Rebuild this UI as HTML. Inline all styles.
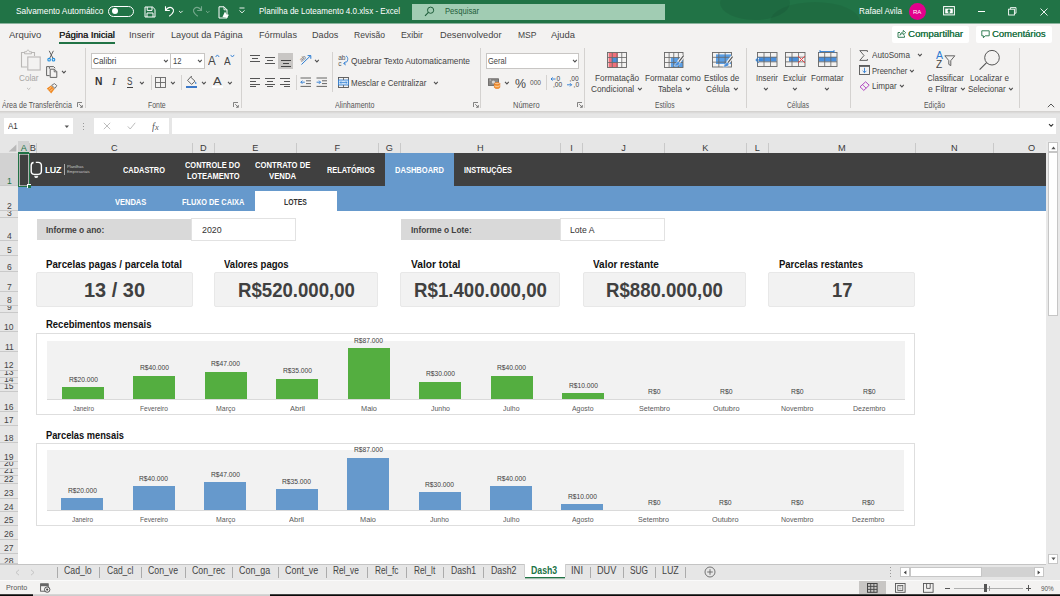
<!DOCTYPE html>
<html lang="pt-BR"><head><meta charset="utf-8"><title>Planilha de Loteamento 4.0.xlsx - Excel</title>
<style>
html,body{margin:0;padding:0;}
body{width:1060px;height:596px;overflow:hidden;background:#fff;font-family:"Liberation Sans",sans-serif;}
#r{position:relative;width:1060px;height:596px;overflow:hidden;background:#fff;}
#r div,#r svg,#r span{position:absolute;}
#r div{box-sizing:border-box;}
.t{white-space:nowrap;line-height:1;transform-origin:0 50%;}
svg{overflow:visible;}
</style></head>
<body><div id="r">
<div style="left:0px;top:0px;width:1060px;height:23px;background:#217346;"></div>
<div style="left:700px;top:0;width:180px;height:23px;overflow:hidden;"><div style="left:20px;top:-14px;width:70px;height:34px;border-radius:50%;background:rgba(0,0,0,0.07);"></div><div style="left:70px;top:2px;width:90px;height:40px;border-radius:50%;background:rgba(0,0,0,0.06);"></div></div>
<span class="t" style="left:15.50px;top:7px;font-size:9px;color:#fff;transform:scaleX(0.9254);">Salvamento Automático</span>
<div style="left:108px;top:5.5px;width:26px;height:11.5px;border:1px solid #fff;border-radius:6px;"></div>
<div style="left:111.5px;top:8.3px;width:6px;height:6px;border-radius:3px;background:#fff;"></div>
<svg style="left:144px;top:5.8px;" width="12" height="12" viewBox="0 0 12 12"><path d="M1 1 H8.6 L11 3.4 V11 H1 Z" fill="none" stroke="#fff" stroke-width="1"/><path d="M3.2 1 V4.4 H8 V1 M3 11 V7 H9 V11" fill="none" stroke="#fff" stroke-width="1"/></svg>
<svg style="left:164px;top:5px;" width="12" height="12" viewBox="0 0 12 12"><path d="M1.5 1.2 V5.5 H5.8" fill="none" stroke="#fff" stroke-width="1.1"/><path d="M1.8 5.3 C3.2 2.6 6.2 1.6 8.3 3.2 C10.6 5 9.8 8.2 5.2 11.2" fill="none" stroke="#fff" stroke-width="1.1"/></svg>
<svg style="left:177.7px;top:9.7px;" width="5.6" height="4.6" viewBox="0 0 5.6 4.6"><path d="M1 0.90 L2.80 2.70 L4.60 0.90" fill="none" stroke="#fff" stroke-width="0.9"/></svg>
<svg style="left:191px;top:5px;opacity:.38;" width="12" height="12" viewBox="0 0 12 12"><path d="M10.5 1.2 V5.5 H6.2" fill="none" stroke="#fff" stroke-width="1.1"/><path d="M10.2 5.3 C8.8 2.6 5.8 1.6 3.7 3.2 C1.4 5 2.2 8.2 6.8 11.2" fill="none" stroke="#fff" stroke-width="1.1"/></svg>
<svg style="left:204.7px;top:9.7px;" width="5.6" height="4.6" viewBox="0 0 5.6 4.6"><path d="M1 0.90 L2.80 2.70 L4.60 0.90" fill="none" stroke="rgba(255,255,255,.4)" stroke-width="0.9"/></svg>
<svg style="left:218px;top:5.8px;" width="12" height="13" viewBox="0 0 12 13"><path d="M1 0.8 H6 L9 3.8 V12 H1 Z" fill="none" stroke="#fff" stroke-width="1"/><path d="M6 0.8 V3.8 H9" fill="none" stroke="#fff" stroke-width="0.9"/><path d="M4.5 11 L7 5.5 L8.5 8.5 L11 8.8 L9 11.8 Z" fill="#fff"/></svg>
<svg style="left:238px;top:7px;" width="8" height="8" viewBox="0 0 8 8"><path d="M1.5 1 H6.5" stroke="#fff" stroke-width="0.9"/><path d="M1.5 3.4 L4 5.9 L6.5 3.4" fill="none" stroke="#fff" stroke-width="0.9"/></svg>
<span class="t" style="left:258.50px;top:7px;font-size:9px;color:#fff;transform:scaleX(0.8949);">Planilha de Loteamento 4.0.xlsx  -  Excel</span>
<div style="left:412px;top:4px;width:253px;height:16px;background:#a1ccb3;"></div>
<svg style="left:424px;top:6px;" width="11" height="11" viewBox="0 0 11 11"><circle cx="6.6" cy="4.2" r="3.1" fill="none" stroke="#1e5c3a" stroke-width="1"/><path d="M4.4 6.4 L1 9.8" stroke="#1e5c3a" stroke-width="1.1"/></svg>
<span class="t" style="left:445.00px;top:7px;font-size:9px;color:#1e5c3a;transform:scaleX(0.8495);">Pesquisar</span>
<span class="t" style="left:858.50px;top:7px;font-size:9px;color:#fff;transform:scaleX(0.9079);">Rafael Avila</span>
<div style="left:908.8px;top:3px;width:17px;height:17px;border-radius:9px;background:#e3008c;"></div>
<span class="t" style="left:913.20px;top:9px;font-size:6px;color:#fff;transform:scaleX(1.0078);">RA</span>
<svg style="left:943px;top:6px;" width="12" height="10" viewBox="0 0 12 10"><rect x="0.6" y="0.6" width="10.8" height="8.3" fill="none" stroke="#fff" stroke-width="1"/><rect x="2.2" y="2.6" width="7.6" height="4.8" fill="#fff"/><path d="M6 3 L4 5.3 H5.3 V7 H6.7 V5.3 H8 Z" fill="#217346"/></svg>
<div style="left:977.5px;top:11px;width:7.5px;height:1px;background:#fff;"></div>
<svg style="left:1008px;top:7px;" width="9" height="9" viewBox="0 0 9 9"><rect x="0.6" y="2.2" width="5.8" height="5.8" fill="none" stroke="#fff" stroke-width="0.9"/><path d="M2.4 2.2 V0.6 H8 V6.2 H6.4" fill="none" stroke="#fff" stroke-width="0.9"/></svg>
<svg style="left:1040px;top:7.5px;" width="8" height="8" viewBox="0 0 8 8"><path d="M0.5 0.5 L7.5 7.5 M7.5 0.5 L0.5 7.5" stroke="#fff" stroke-width="0.9"/></svg>
<div style="left:0px;top:23px;width:1060px;height:87.5px;background:#f3f2f1;"></div>
<div style="left:0px;top:23px;width:1060px;height:1px;background:#8ab39d;"></div>
<span class="t" style="left:9.00px;top:31px;font-size:9.3px;color:#444;transform:scaleX(1.0211);">Arquivo</span>
<span class="t" style="left:129.30px;top:31px;font-size:9.3px;color:#444;transform:scaleX(0.9946);">Inserir</span>
<span class="t" style="left:170.80px;top:31px;font-size:9.3px;color:#444;transform:scaleX(0.9904);">Layout da Página</span>
<span class="t" style="left:258.50px;top:31px;font-size:9.3px;color:#444;transform:scaleX(0.9804);">Fórmulas</span>
<span class="t" style="left:312.00px;top:31px;font-size:9.3px;color:#444;transform:scaleX(0.9783);">Dados</span>
<span class="t" style="left:354.00px;top:31px;font-size:9.3px;color:#444;transform:scaleX(0.9226);">Revisão</span>
<span class="t" style="left:401.00px;top:31px;font-size:9.3px;color:#444;transform:scaleX(0.9460);">Exibir</span>
<span class="t" style="left:439.50px;top:31px;font-size:9.3px;color:#444;transform:scaleX(0.9914);">Desenvolvedor</span>
<span class="t" style="left:517.50px;top:31px;font-size:9.3px;color:#444;transform:scaleX(0.9180);">MSP</span>
<span class="t" style="left:551.00px;top:31px;font-size:9.3px;color:#444;transform:scaleX(1.0090);">Ajuda</span>
<span class="t" style="left:58.80px;top:31px;font-size:9.3px;color:#222;transform:scaleX(1.0069);text-shadow:0.3px 0 0 #222;">Página Inicial</span>
<div style="left:58.5px;top:42.3px;width:56.5px;height:1.6px;background:#217346;"></div>
<div style="left:892px;top:25.5px;width:77px;height:17px;background:#fff;border-radius:2px;"></div>
<div style="left:976px;top:25.5px;width:76px;height:17px;background:#fff;border-radius:2px;"></div>
<svg style="left:897px;top:29px;" width="9" height="9" viewBox="0 0 9 9"><path d="M3 3.5 H1 V8.3 H7.5 V6.5" fill="none" stroke="#217346" stroke-width="0.9"/><path d="M3 6.3 C3.3 4 5 3.1 6.3 3.1 V1.3 L8.7 3.7 L6.3 6 V4.4 C5 4.4 3.8 4.9 3 6.3 Z" fill="none" stroke="#217346" stroke-width="0.8"/></svg>
<span class="t" style="left:908.30px;top:30px;font-size:9.3px;color:#217346;transform:scaleX(1.0332);text-shadow:0.3px 0 0 #217346;">Compartilhar</span>
<svg style="left:981px;top:29.5px;" width="9" height="9" viewBox="0 0 9 9"><path d="M0.8 0.8 H8.2 V5.8 H4.2 L2.4 7.8 V5.8 H0.8 Z" fill="none" stroke="#217346" stroke-width="0.9"/></svg>
<span class="t" style="left:991.80px;top:30px;font-size:9.3px;color:#217346;transform:scaleX(1.0148);text-shadow:0.3px 0 0 #217346;">Comentários</span>
<svg style="left:20px;top:49px;" width="22" height="22" viewBox="0 0 22 22"><path d="M4 3.5 H1.5 V18 H7" fill="none" stroke="#b9b7b5" stroke-width="1.1"/><path d="M12 3.5 H14.5 V7" fill="none" stroke="#b9b7b5" stroke-width="1.1"/><path d="M4.5 4.8 V2.8 H6.5 C6.7 0.6 9.3 0.6 9.5 2.8 H11.5 V4.8 Z" fill="none" stroke="#b9b7b5" stroke-width="1"/><rect x="7.8" y="8" width="12.4" height="13" fill="#f3f2f1" stroke="#b9b7b5" stroke-width="1.1"/></svg>
<span class="t" style="left:19.30px;top:74px;font-size:8.9px;color:#a6a4a2;transform:scaleX(0.9169);">Colar</span>
<svg style="left:26.3px;top:86.5px;" width="5.4" height="4.4" viewBox="0 0 5.4 4.4"><path d="M1 0.85 L2.70 2.55 L4.40 0.85" fill="none" stroke="#b0aeac" stroke-width="0.8"/></svg>
<svg style="left:46px;top:49.5px;" width="10" height="12" viewBox="0 0 10 12"><path d="M3.2 0.8 L7 8.4 M7.4 0.8 L3.6 8.4" stroke="#555" stroke-width="0.9" fill="none"/><circle cx="3.1" cy="9.7" r="1.3" fill="none" stroke="#2490df" stroke-width="1.1"/><circle cx="7.5" cy="9.7" r="1.3" fill="none" stroke="#2490df" stroke-width="1.1"/></svg>
<svg style="left:45.5px;top:66px;" width="12" height="12" viewBox="0 0 12 12"><path d="M3.4 2.8 V0.6 H7.6 L9.2 2.2" fill="none" stroke="#555" stroke-width="0.9"/><path d="M0.6 2.2 V9.6 H3.6" fill="none" stroke="#555" stroke-width="0.9"/><path d="M0.6 2.4 V0.6 H3" fill="none" stroke="#555" stroke-width="0.9"/><path d="M4.2 3.2 H8.4 L10.8 5.6 V11.4 H4.2 Z" fill="#f3f2f1" stroke="#555" stroke-width="0.9"/><path d="M8.2 3.4 V5.8 H10.6" fill="none" stroke="#555" stroke-width="0.8"/></svg>
<svg style="left:60.6px;top:70.1px;" width="5.8" height="4.8" viewBox="0 0 5.8 4.8"><path d="M1 0.95 L2.90 2.85 L4.80 0.95" fill="none" stroke="#505050" stroke-width="1.1"/></svg>
<svg style="left:45.5px;top:82.5px;" width="12" height="11" viewBox="0 0 12 11"><path d="M5 2.6 L8.6 6 L5.2 10.4 L0.8 5.4 Z" fill="#f08a24"/><path d="M2.6 6.6 L5.4 4 M4 8.4 L6.8 5.6" stroke="#fbe3c8" stroke-width="0.7"/><path d="M5.6 2.4 L8.4 0.6 L10.8 2.6 L9 5.4 Z" fill="#f3f2f1" stroke="#555" stroke-width="0.8"/></svg>
<span class="t" style="left:2.00px;top:102px;font-size:8.2px;color:#555;transform:scaleX(0.8676);">Área de Transferência</span>
<svg style="left:77px;top:102.3px;" width="6" height="6" viewBox="0 0 6 6"><path d="M0.5 5 V0.5 H5" fill="none" stroke="#666" stroke-width="0.8"/><path d="M2.2 2.2 L5.2 5.2 M5.3 3 V5.3 H3" fill="none" stroke="#666" stroke-width="0.8"/></svg>
<div style="left:85px;top:48px;width:1px;height:60px;background:#d4d2d0;"></div>
<div style="left:91px;top:53px;width:80px;height:15.5px;background:#fff;border:1px solid #c8c6c4;"></div>
<div style="left:170px;top:53px;width:34.5px;height:15.5px;background:#fff;border:1px solid #c8c6c4;"></div>
<span class="t" style="left:93.00px;top:57px;font-size:8.9px;color:#444;transform:scaleX(0.9317);">Calibri</span>
<svg style="left:163.1px;top:59.4px;" width="5.8" height="4.8" viewBox="0 0 5.8 4.8"><path d="M1 0.95 L2.90 2.85 L4.80 0.95" fill="none" stroke="#505050" stroke-width="1.1"/></svg>
<span class="t" style="left:173.00px;top:57px;font-size:8.9px;color:#444;transform:scaleX(0.8586);">12</span>
<svg style="left:197.1px;top:59.4px;" width="5.8" height="4.8" viewBox="0 0 5.8 4.8"><path d="M1 0.95 L2.90 2.85 L4.80 0.95" fill="none" stroke="#505050" stroke-width="1.1"/></svg>
<span class="t" style="left:207.50px;top:55px;font-size:12px;color:#444;transform:scaleX(0.9620);">A</span>
<svg style="left:214.5px;top:53.5px;" width="5" height="4" viewBox="0 0 5 4"><path d="M0.6 3 L2.4 0.9 L4.2 3" fill="none" stroke="#2b7cd3" stroke-width="0.9"/></svg>
<span class="t" style="left:224.40px;top:57px;font-size:10px;color:#444;transform:scaleX(0.9895);">A</span>
<svg style="left:229.5px;top:53.5px;" width="5" height="4" viewBox="0 0 5 4"><path d="M0.6 0.9 L2.4 3 L4.2 0.9" fill="none" stroke="#2b7cd3" stroke-width="0.9"/></svg>
<span class="t" style="left:94.80px;top:77px;font-size:10.2px;color:#333;font-weight:700;transform:scaleX(1.0046);">N</span>
<span class="t" style="left:112.30px;top:77px;font-size:10.6px;color:#444;font-style:italic;font-family:'Liberation Serif',serif;transform:scaleX(1.1206);">I</span>
<span class="t" style="left:126.80px;top:77px;font-size:10px;color:#444;transform:scaleX(0.8096);">S</span>
<div style="left:127px;top:87px;width:5.5px;height:0.9px;background:#444;"></div>
<svg style="left:138.9px;top:80.69999999999999px;" width="5.8" height="4.8" viewBox="0 0 5.8 4.8"><path d="M1 0.95 L2.90 2.85 L4.80 0.95" fill="none" stroke="#505050" stroke-width="1.1"/></svg>
<div style="left:150.5px;top:75px;width:1px;height:15px;background:#d4d2d0;"></div>
<svg style="left:155px;top:77px;" width="11" height="11" viewBox="0 0 11 11"><rect x="0.5" y="0.5" width="10" height="10" fill="none" stroke="#666" stroke-width="0.9"/><path d="M5.5 0.5 V10.5 M0.5 5.5 H10.5" stroke="#666" stroke-width="0.9"/></svg>
<svg style="left:169.9px;top:80.69999999999999px;" width="5.8" height="4.8" viewBox="0 0 5.8 4.8"><path d="M1 0.95 L2.90 2.85 L4.80 0.95" fill="none" stroke="#505050" stroke-width="1.1"/></svg>
<div style="left:181.3px;top:75px;width:1px;height:15px;background:#d4d2d0;"></div>
<svg style="left:186px;top:76px;" width="12" height="9" viewBox="0 0 12 9"><path d="M4.6 1 L9 5.2 L5.6 8.4 L1.6 4.4 Z" fill="none" stroke="#555" stroke-width="0.9"/><path d="M4.6 1 L6 0.2" stroke="#555" stroke-width="0.8"/><path d="M9.6 5.6 C10.8 7 10.6 8 9.8 8 C9 8 8.8 7 9.6 5.6 Z" fill="#2b7cd3"/></svg>
<div style="left:186.2px;top:86px;width:11.3px;height:2.3px;background:#3b78c8;"></div>
<svg style="left:200.9px;top:80.69999999999999px;" width="5.8" height="4.8" viewBox="0 0 5.8 4.8"><path d="M1 0.95 L2.90 2.85 L4.80 0.95" fill="none" stroke="#505050" stroke-width="1.1"/></svg>
<span class="t" style="left:213.00px;top:76px;font-size:10.6px;color:#444;transform:scaleX(1.2164);">A</span>
<div style="left:212.3px;top:86.2px;width:10.4px;height:2.2px;background:#fff;"></div>
<svg style="left:226.9px;top:80.69999999999999px;" width="5.8" height="4.8" viewBox="0 0 5.8 4.8"><path d="M1 0.95 L2.90 2.85 L4.80 0.95" fill="none" stroke="#505050" stroke-width="1.1"/></svg>
<span class="t" style="left:148.30px;top:102px;font-size:8.2px;color:#555;transform:scaleX(0.8441);">Fonte</span>
<svg style="left:232.5px;top:102.3px;" width="6" height="6" viewBox="0 0 6 6"><path d="M0.5 5 V0.5 H5" fill="none" stroke="#666" stroke-width="0.8"/><path d="M2.2 2.2 L5.2 5.2 M5.3 3 V5.3 H3" fill="none" stroke="#666" stroke-width="0.8"/></svg>
<div style="left:241px;top:48px;width:1px;height:60px;background:#d4d2d0;"></div>
<div style="left:250.0px;top:55.3px;width:9.6px;height:0.9px;background:#555;"></div>
<div style="left:251.9px;top:58.1px;width:5.8px;height:0.9px;background:#555;"></div>
<div style="left:250.0px;top:60.9px;width:9.6px;height:0.9px;background:#555;"></div>
<div style="left:265.0px;top:57.2px;width:9.6px;height:0.9px;background:#555;"></div>
<div style="left:266.9px;top:60.0px;width:5.8px;height:0.9px;background:#555;"></div>
<div style="left:265.0px;top:62.8px;width:9.6px;height:0.9px;background:#555;"></div>
<div style="left:278px;top:52.5px;width:15.2px;height:16.5px;background:#c8c6c4;"></div>
<div style="left:281.0px;top:60.2px;width:9.6px;height:0.9px;background:#444;"></div>
<div style="left:282.9px;top:63.0px;width:5.8px;height:0.9px;background:#444;"></div>
<div style="left:281.0px;top:65.8px;width:9.6px;height:0.9px;background:#444;"></div>
<svg style="left:300px;top:54px;" width="13" height="12" viewBox="0 0 13 12"><path d="M1.5 10.5 L10.5 1.8" stroke="#2b7cd3" stroke-width="1"/><path d="M7.6 1.6 H10.8 V4.8" fill="none" stroke="#2b7cd3" stroke-width="1"/><text x="0" y="6.4" font-size="5.6" fill="#555" font-family="Liberation Sans, sans-serif" transform="rotate(-40 3 5)">ab</text></svg>
<svg style="left:314.1px;top:59.4px;" width="5.8" height="4.8" viewBox="0 0 5.8 4.8"><path d="M1 0.95 L2.90 2.85 L4.80 0.95" fill="none" stroke="#505050" stroke-width="1.1"/></svg>
<div style="left:250px;top:78.0px;width:9.6px;height:0.9px;background:#555;"></div>
<div style="left:250px;top:80.8px;width:6.4px;height:0.9px;background:#555;"></div>
<div style="left:250px;top:83.6px;width:9.6px;height:0.9px;background:#555;"></div>
<div style="left:250px;top:86.4px;width:6.4px;height:0.9px;background:#555;"></div>
<div style="left:265.0px;top:78.0px;width:9.6px;height:0.9px;background:#555;"></div>
<div style="left:266.6px;top:80.8px;width:6.4px;height:0.9px;background:#555;"></div>
<div style="left:265.0px;top:83.6px;width:9.6px;height:0.9px;background:#555;"></div>
<div style="left:266.6px;top:86.4px;width:6.4px;height:0.9px;background:#555;"></div>
<div style="left:280.4px;top:78.0px;width:9.6px;height:0.9px;background:#555;"></div>
<div style="left:283.6px;top:80.8px;width:6.4px;height:0.9px;background:#555;"></div>
<div style="left:280.4px;top:83.6px;width:9.6px;height:0.9px;background:#555;"></div>
<div style="left:283.6px;top:86.4px;width:6.4px;height:0.9px;background:#555;"></div>
<div style="left:295.5px;top:75px;width:1px;height:15px;background:#d4d2d0;"></div>
<svg style="left:300px;top:77px;" width="12" height="11" viewBox="0 0 12 11"><path d="M0.5 1 H11 M6 3.8 H11 M6 6.6 H11 M0.5 9.4 H11" stroke="#555" stroke-width="0.9"/><path d="M4.8 5.2 H0.8 M2.4 3.6 L0.8 5.2 L2.4 6.8" fill="none" stroke="#2b7cd3" stroke-width="0.9"/></svg>
<svg style="left:315.5px;top:77px;" width="12" height="11" viewBox="0 0 12 11"><path d="M0.5 1 H11 M6 3.8 H11 M6 6.6 H11 M0.5 9.4 H11" stroke="#555" stroke-width="0.9"/><path d="M0.6 5.2 H4.6 M3 3.6 L4.6 5.2 L3 6.8" fill="none" stroke="#2b7cd3" stroke-width="0.9"/></svg>
<div style="left:332px;top:52px;width:1px;height:40px;background:#d4d2d0;"></div>
<svg style="left:338px;top:55px;" width="11" height="12" viewBox="0 0 11 12"><text x="0.2" y="5.4" font-size="6.6" fill="#555" font-family="Liberation Sans, sans-serif">ab</text><text x="0.2" y="11" font-size="6.6" fill="#555" font-family="Liberation Sans, sans-serif">c</text><path d="M8 1 C10.6 1.8 10.6 7.6 6 8.4 M7.6 6.6 L5.6 8.5 L7.8 10" fill="none" stroke="#2b7cd3" stroke-width="0.9"/></svg>
<span class="t" style="left:351.00px;top:57px;font-size:8.9px;color:#444;transform:scaleX(0.9359);">Quebrar Texto Automaticamente</span>
<svg style="left:337.5px;top:77px;" width="11" height="11" viewBox="0 0 11 11"><rect x="0.5" y="0.5" width="10" height="10" fill="none" stroke="#555" stroke-width="0.9"/><rect x="0.5" y="3" width="10" height="5" fill="#cfe3f7" stroke="#2b7cd3" stroke-width="0.8"/><path d="M2 5.5 H9 M3.2 4.3 L2 5.5 L3.2 6.7 M7.8 4.3 L9 5.5 L7.8 6.7" fill="none" stroke="#2b7cd3" stroke-width="0.7"/><path d="M5.5 0.5 V3 M5.5 8 V10.5" stroke="#555" stroke-width="0.8"/></svg>
<span class="t" style="left:351.00px;top:79px;font-size:8.9px;color:#444;transform:scaleX(0.8979);">Mesclar e Centralizar</span>
<svg style="left:433.1px;top:80.69999999999999px;" width="5.8" height="4.8" viewBox="0 0 5.8 4.8"><path d="M1 0.95 L2.90 2.85 L4.80 0.95" fill="none" stroke="#505050" stroke-width="1.1"/></svg>
<span class="t" style="left:335.30px;top:102px;font-size:8.2px;color:#555;transform:scaleX(0.8665);">Alinhamento</span>
<svg style="left:472.5px;top:102.3px;" width="6" height="6" viewBox="0 0 6 6"><path d="M0.5 5 V0.5 H5" fill="none" stroke="#666" stroke-width="0.8"/><path d="M2.2 2.2 L5.2 5.2 M5.3 3 V5.3 H3" fill="none" stroke="#666" stroke-width="0.8"/></svg>
<div style="left:480px;top:48px;width:1px;height:60px;background:#d4d2d0;"></div>
<div style="left:485.8px;top:53px;width:93.2px;height:15.5px;background:#fff;border:1px solid #c8c6c4;"></div>
<span class="t" style="left:488.30px;top:57px;font-size:8.9px;color:#444;transform:scaleX(0.8501);">Geral</span>
<svg style="left:571.9px;top:59.4px;" width="5.8" height="4.8" viewBox="0 0 5.8 4.8"><path d="M1 0.95 L2.90 2.85 L4.80 0.95" fill="none" stroke="#505050" stroke-width="1.1"/></svg>
<svg style="left:488px;top:77.5px;" width="13" height="11" viewBox="0 0 13 11"><rect x="0.5" y="0.8" width="10" height="6.6" fill="#8a8886" stroke="#605e5c" stroke-width="0.8"/><circle cx="5.4" cy="4.1" r="1.6" fill="#d8d6d4"/><path d="M1.6 2 H3 M8 6.2 H9.4" stroke="#e6e4e2" stroke-width="0.7"/><path d="M6.4 5.6 V9.4 C6.4 10.8 11.8 10.8 11.8 9.4 V5.6" fill="#f59b3c" stroke="#e8761a" stroke-width="0.7"/><ellipse cx="9.1" cy="5.6" rx="2.7" ry="1.1" fill="#fbc58a" stroke="#e8761a" stroke-width="0.7"/><path d="M6.4 7.5 C6.4 8.9 11.8 8.9 11.8 7.5" fill="none" stroke="#fbe3c8" stroke-width="0.6"/></svg>
<svg style="left:503.6px;top:80.69999999999999px;" width="5.8" height="4.8" viewBox="0 0 5.8 4.8"><path d="M1 0.95 L2.90 2.85 L4.80 0.95" fill="none" stroke="#505050" stroke-width="1.1"/></svg>
<span class="t" style="left:514.50px;top:77px;font-size:13px;color:#444;transform:scaleX(0.9516);">%</span>
<span class="t" style="left:530.00px;top:80px;font-size:6.6px;color:#555;">000</span>
<div style="left:545.5px;top:75px;width:1px;height:15px;background:#d4d2d0;"></div>
<svg style="left:549.5px;top:76px;" width="12" height="12" viewBox="0 0 12 12"><text x="6.6" y="5.2" font-size="6.6" fill="#444" font-family="Liberation Sans, sans-serif">0</text><text x="3" y="10.8" font-size="6.6" fill="#444" font-family="Liberation Sans, sans-serif">,00</text><path d="M5.6 3 H1 M2.6 1.4 L1 3 L2.6 4.6" fill="none" stroke="#2b7cd3" stroke-width="0.9"/></svg>
<svg style="left:565.5px;top:76px;" width="12" height="12" viewBox="0 0 12 12"><text x="3.4" y="5.2" font-size="6.6" fill="#444" font-family="Liberation Sans, sans-serif">,00</text><text x="7.6" y="10.8" font-size="6.6" fill="#444" font-family="Liberation Sans, sans-serif">,0</text><path d="M1 8.8 H5.6 M4 7.2 L5.6 8.8 L4 10.4" fill="none" stroke="#2b7cd3" stroke-width="0.9"/></svg>
<span class="t" style="left:513.30px;top:102px;font-size:8.2px;color:#555;transform:scaleX(0.9155);">Número</span>
<svg style="left:576.5px;top:102.3px;" width="6" height="6" viewBox="0 0 6 6"><path d="M0.5 5 V0.5 H5" fill="none" stroke="#666" stroke-width="0.8"/><path d="M2.2 2.2 L5.2 5.2 M5.3 3 V5.3 H3" fill="none" stroke="#666" stroke-width="0.8"/></svg>
<div style="left:584px;top:48px;width:1px;height:60px;background:#d4d2d0;"></div>
<svg style="left:607px;top:51.5px;" width="20" height="16" viewBox="0 0 20 16"><rect x="1.6" y="0.5" width="9.4" height="15" fill="#f1707b"/><rect x="4.6" y="5.5" width="6.4" height="5" fill="#4a8fdc"/><rect x="11" y="5.5" width="4.4" height="5" fill="#fdfdfd"/><rect x="0.5" y="0.5" width="19" height="15" fill="none" stroke="#666" stroke-width="0.9"/><path d="M0.5 5.50 H19.5" stroke="#666" stroke-width="0.8"/><path d="M0.5 10.50 H19.5" stroke="#666" stroke-width="0.8"/><path d="M5.25 0.5 V15.5" stroke="#666" stroke-width="0.8"/><path d="M10.00 0.5 V15.5" stroke="#666" stroke-width="0.8"/><path d="M14.75 0.5 V15.5" stroke="#666" stroke-width="0.8"/></svg>
<span class="t" style="left:595.00px;top:74px;font-size:8.9px;color:#444;transform:scaleX(0.9329);">Formatação</span>
<span class="t" style="left:591.30px;top:85px;font-size:8.9px;color:#444;transform:scaleX(0.9289);">Condicional</span>
<svg style="left:637.1px;top:86.5px;" width="5.8" height="4.8" viewBox="0 0 5.8 4.8"><path d="M1 0.95 L2.90 2.85 L4.80 0.95" fill="none" stroke="#505050" stroke-width="1.1"/></svg>
<svg style="left:664px;top:51.5px;" width="19.5" height="16" viewBox="0 0 19.5 16"><rect x="6.8" y="5.6" width="12.2" height="9.9" fill="#5a9fe6"/><rect x="0.5" y="0.5" width="18.5" height="15" fill="none" stroke="#666" stroke-width="0.9"/><path d="M0.5 5.50 H19.0" stroke="#666" stroke-width="0.8"/><path d="M0.5 10.50 H19.0" stroke="#666" stroke-width="0.8"/><path d="M5.12 0.5 V15.5" stroke="#666" stroke-width="0.8"/><path d="M9.75 0.5 V15.5" stroke="#666" stroke-width="0.8"/><path d="M14.38 0.5 V15.5" stroke="#666" stroke-width="0.8"/></svg>
<svg style="left:673px;top:55px;" width="12" height="14" viewBox="0 0 12 14"><path d="M10.6 0.6 L5.4 7.4" stroke="#f3f2f1" stroke-width="3.4"/><path d="M10.6 0.6 L5.6 7.2" stroke="#555" stroke-width="1.1"/><path d="M5.8 6.6 C3.6 6.4 3 8.6 1 10.8 C4.6 11.4 7 10 6.9 7.6 Z" fill="#4a8fdc" stroke="#f3f2f1" stroke-width="0.5"/></svg>
<span class="t" style="left:645.30px;top:74px;font-size:8.9px;color:#444;transform:scaleX(0.9281);">Formatar como</span>
<span class="t" style="left:658.00px;top:85px;font-size:8.9px;color:#444;transform:scaleX(0.9151);">Tabela</span>
<svg style="left:684.6px;top:86.5px;" width="5.8" height="4.8" viewBox="0 0 5.8 4.8"><path d="M1 0.95 L2.90 2.85 L4.80 0.95" fill="none" stroke="#505050" stroke-width="1.1"/></svg>
<svg style="left:712px;top:51.5px;" width="20" height="15.5" viewBox="0 0 20 15.5"><rect x="4" y="2.4" width="15" height="9.6" fill="#5a9fe6"/><rect x="0.5" y="0.5" width="19" height="14.5" fill="none" stroke="#666" stroke-width="0.9"/><path d="M0.5 5.33 H19.5" stroke="#666" stroke-width="0.8"/><path d="M0.5 10.17 H19.5" stroke="#666" stroke-width="0.8"/><path d="M6.83 0.5 V15.0" stroke="#666" stroke-width="0.8"/><path d="M13.17 0.5 V15.0" stroke="#666" stroke-width="0.8"/></svg>
<svg style="left:721.5px;top:55.5px;" width="12" height="14" viewBox="0 0 12 14"><path d="M10.6 0.6 L5.4 7.4" stroke="#f3f2f1" stroke-width="3.4"/><path d="M10.6 0.6 L5.6 7.2" stroke="#555" stroke-width="1.1"/><path d="M5.8 6.6 C3.6 6.4 3 8.6 1 10.8 C4.6 11.4 7 10 6.9 7.6 Z" fill="#4a8fdc" stroke="#f3f2f1" stroke-width="0.5"/></svg>
<span class="t" style="left:704.00px;top:74px;font-size:8.9px;color:#444;transform:scaleX(0.9148);">Estilos de</span>
<span class="t" style="left:706.30px;top:85px;font-size:8.9px;color:#444;transform:scaleX(0.9393);">Célula</span>
<svg style="left:732.6px;top:86.5px;" width="5.8" height="4.8" viewBox="0 0 5.8 4.8"><path d="M1 0.95 L2.90 2.85 L4.80 0.95" fill="none" stroke="#505050" stroke-width="1.1"/></svg>
<span class="t" style="left:655.30px;top:102px;font-size:8.2px;color:#555;transform:scaleX(0.8157);">Estilos</span>
<div style="left:746px;top:48px;width:1px;height:60px;background:#d4d2d0;"></div>
<svg style="left:756.5px;top:52.3px;" width="20.5" height="15" viewBox="0 0 20.5 15"><rect x="2" y="5" width="17.5" height="4.6" fill="#4a8fdc"/><rect x="0.5" y="0.5" width="19.5" height="14" fill="none" stroke="#666" stroke-width="0.9"/><path d="M0.5 5.17 H20.0" stroke="#666" stroke-width="0.8"/><path d="M0.5 9.83 H20.0" stroke="#666" stroke-width="0.8"/><path d="M7.00 0.5 V14.5" stroke="#666" stroke-width="0.8"/><path d="M13.50 0.5 V14.5" stroke="#666" stroke-width="0.8"/></svg>
<svg style="left:755px;top:55.5px;" width="8" height="8" viewBox="0 0 8 8"><path d="M7.6 4 H1 M3.6 1 L0.8 4 L3.6 7" fill="none" stroke="#2b7cd3" stroke-width="1"/></svg>
<span class="t" style="left:755.50px;top:74px;font-size:8.9px;color:#444;transform:scaleX(0.8897);">Inserir</span>
<svg style="left:762.9px;top:86.5px;" width="5.8" height="4.8" viewBox="0 0 5.8 4.8"><path d="M1 0.95 L2.90 2.85 L4.80 0.95" fill="none" stroke="#505050" stroke-width="1.1"/></svg>
<svg style="left:785px;top:52.3px;" width="20.5" height="15" viewBox="0 0 20.5 15"><rect x="4" y="5" width="9" height="4.6" fill="#4a8fdc"/><rect x="0.5" y="0.5" width="19.5" height="14" fill="none" stroke="#666" stroke-width="0.9"/><path d="M0.5 5.17 H20.0" stroke="#666" stroke-width="0.8"/><path d="M0.5 9.83 H20.0" stroke="#666" stroke-width="0.8"/><path d="M7.00 0.5 V14.5" stroke="#666" stroke-width="0.8"/><path d="M13.50 0.5 V14.5" stroke="#666" stroke-width="0.8"/></svg>
<svg style="left:797px;top:55px;" width="9" height="9" viewBox="0 0 9 9"><path d="M1 1 L8 8 M8 1 L1 8" stroke="#e8464a" stroke-width="1"/></svg>
<span class="t" style="left:783.00px;top:74px;font-size:8.9px;color:#444;transform:scaleX(0.8725);">Excluir</span>
<svg style="left:791.6px;top:86.5px;" width="5.8" height="4.8" viewBox="0 0 5.8 4.8"><path d="M1 0.95 L2.90 2.85 L4.80 0.95" fill="none" stroke="#505050" stroke-width="1.1"/></svg>
<svg style="left:817.5px;top:52.3px;" width="19.5" height="15" viewBox="0 0 19.5 15"><rect x="0.5" y="5" width="18" height="4.6" fill="#4a8fdc"/><rect x="0.5" y="0.5" width="18.5" height="14" fill="none" stroke="#666" stroke-width="0.9"/><path d="M0.5 5.17 H19.0" stroke="#666" stroke-width="0.8"/><path d="M0.5 9.83 H19.0" stroke="#666" stroke-width="0.8"/><path d="M6.67 0.5 V14.5" stroke="#666" stroke-width="0.8"/><path d="M12.83 0.5 V14.5" stroke="#666" stroke-width="0.8"/></svg>
<svg style="left:819px;top:49.5px;" width="16" height="3" viewBox="0 0 16 3"><path d="M1 1.5 H15 M1 0 V3 M15 0 V3" stroke="#2b7cd3" stroke-width="0.9"/></svg>
<span class="t" style="left:811.00px;top:74px;font-size:8.9px;color:#444;transform:scaleX(0.9086);">Formatar</span>
<svg style="left:823.9px;top:86.5px;" width="5.8" height="4.8" viewBox="0 0 5.8 4.8"><path d="M1 0.95 L2.90 2.85 L4.80 0.95" fill="none" stroke="#505050" stroke-width="1.1"/></svg>
<span class="t" style="left:787.30px;top:102px;font-size:8.2px;color:#555;transform:scaleX(0.8045);">Células</span>
<div style="left:850px;top:48px;width:1px;height:60px;background:#d4d2d0;"></div>
<svg style="left:859px;top:49.5px;" width="9" height="11" viewBox="0 0 9 11"><path d="M8.4 2 V0.6 H0.8 L5 5.5 L0.8 10.4 H8.4 V9" fill="none" stroke="#555" stroke-width="0.9"/></svg>
<span class="t" style="left:872.00px;top:51px;font-size:8.9px;color:#444;transform:scaleX(0.9144);">AutoSoma</span>
<svg style="left:916.6px;top:52.7px;" width="5.8" height="4.8" viewBox="0 0 5.8 4.8"><path d="M1 0.95 L2.90 2.85 L4.80 0.95" fill="none" stroke="#505050" stroke-width="1.1"/></svg>
<svg style="left:858.5px;top:65px;" width="11" height="10" viewBox="0 0 11 10"><rect x="0.5" y="0.5" width="10" height="9" fill="none" stroke="#555" stroke-width="0.9"/><path d="M0.5 1.2 H10.5" stroke="#555" stroke-width="1.3"/><path d="M5.5 2.8 V7.6 M3.6 5.8 L5.5 7.7 L7.4 5.8" fill="none" stroke="#2b7cd3" stroke-width="0.9"/></svg>
<span class="t" style="left:872.00px;top:67px;font-size:8.9px;color:#444;transform:scaleX(0.8597);">Preencher</span>
<svg style="left:908.7px;top:68.5px;" width="5.8" height="4.8" viewBox="0 0 5.8 4.8"><path d="M1 0.95 L2.90 2.85 L4.80 0.95" fill="none" stroke="#505050" stroke-width="1.1"/></svg>
<svg style="left:858.5px;top:81px;" width="11" height="10" viewBox="0 0 11 10"><path d="M6.6 0.8 L10.2 4.2 L4.8 9.4 L1 5.8 Z" fill="none" stroke="#b146c2" stroke-width="1"/><path d="M3.4 3.6 L7.2 7.2" stroke="#b146c2" stroke-width="0.9"/></svg>
<span class="t" style="left:872.00px;top:82px;font-size:8.9px;color:#444;transform:scaleX(0.9116);">Limpar</span>
<svg style="left:898.7px;top:84.3px;" width="5.8" height="4.8" viewBox="0 0 5.8 4.8"><path d="M1 0.95 L2.90 2.85 L4.80 0.95" fill="none" stroke="#505050" stroke-width="1.1"/></svg>
<span class="t" style="left:935.80px;top:51px;font-size:10.4px;color:#2b7cd3;transform:scaleX(1.0091);">A</span>
<span class="t" style="left:936.20px;top:60px;font-size:10.4px;color:#444;transform:scaleX(0.9760);">Z</span>
<svg style="left:943.5px;top:54.5px;" width="12" height="12" viewBox="0 0 12 12"><path d="M0.8 0.8 H10.8 L6.8 5.6 V10.6 L4.8 9.4 V5.6 Z" fill="none" stroke="#555" stroke-width="0.9"/></svg>
<span class="t" style="left:927.30px;top:74px;font-size:8.9px;color:#444;transform:scaleX(0.9014);">Classificar</span>
<span class="t" style="left:928.30px;top:85px;font-size:8.9px;color:#444;transform:scaleX(0.9680);">e Filtrar</span>
<svg style="left:960.1px;top:86.5px;" width="5.8" height="4.8" viewBox="0 0 5.8 4.8"><path d="M1 0.95 L2.90 2.85 L4.80 0.95" fill="none" stroke="#505050" stroke-width="1.1"/></svg>
<svg style="left:979px;top:49.5px;" width="22" height="20" viewBox="0 0 22 20"><circle cx="13" cy="7.7" r="7.3" fill="none" stroke="#555" stroke-width="1"/><path d="M7.6 12.6 L0.6 19.6" stroke="#555" stroke-width="1.1"/></svg>
<span class="t" style="left:970.30px;top:74px;font-size:8.9px;color:#444;transform:scaleX(0.9061);">Localizar e</span>
<span class="t" style="left:967.50px;top:85px;font-size:8.9px;color:#444;transform:scaleX(0.8988);">Selecionar</span>
<svg style="left:1007.6px;top:86.5px;" width="5.8" height="4.8" viewBox="0 0 5.8 4.8"><path d="M1 0.95 L2.90 2.85 L4.80 0.95" fill="none" stroke="#505050" stroke-width="1.1"/></svg>
<span class="t" style="left:924.30px;top:102px;font-size:8.2px;color:#555;transform:scaleX(0.8376);">Edição</span>
<div style="left:1019px;top:48px;width:1px;height:60px;background:#d4d2d0;"></div>
<svg style="left:1046.6px;top:103.2px;" width="8" height="5" viewBox="0 0 8 5"><path d="M0.8 4.2 L4 1 L7.2 4.2" fill="none" stroke="#444" stroke-width="0.9"/></svg>
<div style="left:0;top:110.5px;width:1060px;height:3px;background:linear-gradient(#d2d0ce,#e6e6e6);"></div>
<div style="left:0px;top:110.5px;width:1060px;height:30.5px;background:#e6e6e6;"></div>
<div style="left:0;top:110.5px;width:1060px;height:3px;background:linear-gradient(#d0cecc,#e6e6e6);"></div>
<div style="left:3.5px;top:118px;width:69.8px;height:16px;background:#fff;"></div>
<span class="t" style="left:7.50px;top:122px;font-size:9px;color:#333;transform:scaleX(0.8902);">A1</span>
<svg style="left:63.5px;top:124.5px;" width="6" height="4" viewBox="0 0 6 4"><path d="M0.6 0.6 H5 L2.8 3 Z" fill="#555"/></svg>
<div style="left:83px;top:122.6px;width:1px;height:1.2px;background:#999;"></div>
<div style="left:83px;top:125.6px;width:1px;height:1.2px;background:#999;"></div>
<div style="left:83px;top:128.6px;width:1px;height:1.2px;background:#999;"></div>
<div style="left:94px;top:118px;width:75.3px;height:16px;background:#fff;"></div>
<svg style="left:102.5px;top:122.2px;" width="8" height="8" viewBox="0 0 8 8"><path d="M0.8 0.8 L7.2 7.2 M7.2 0.8 L0.8 7.2" stroke="#b5b5b5" stroke-width="0.9"/></svg>
<svg style="left:127px;top:122.4px;" width="9" height="8" viewBox="0 0 9 8"><path d="M0.8 4.4 L3.2 7 L8.2 0.8" fill="none" stroke="#b5b5b5" stroke-width="0.9"/></svg>
<span class="t" style="left:152.30px;top:122px;font-size:10px;color:#555;font-style:italic;font-family:'Liberation Serif',serif;transform:scaleX(0.9718);">f</span>
<span class="t" style="left:155.40px;top:124px;font-size:7.4px;color:#555;font-style:italic;font-family:'Liberation Serif',serif;transform:scaleX(1.1351);">x</span>
<div style="left:171.8px;top:118px;width:884.5px;height:16px;background:#fff;"></div>
<svg style="left:1047.7px;top:123.30000000000001px;" width="6.2" height="5.2" viewBox="0 0 6.2 5.2"><path d="M1 1.05 L3.10 3.15 L5.20 1.05" fill="none" stroke="#333" stroke-width="1.1"/></svg>
<div style="left:0px;top:141px;width:1060px;height:12.3px;background:#e6e6e6;"></div>
<svg style="left:7.5px;top:144px;" width="9" height="8" viewBox="0 0 9 8"><path d="M8.4 0.6 V7.4 H0.8 Z" fill="#b8b8b8"/></svg>
<div style="left:18.3px;top:141px;width:11px;height:12.3px;background:#d2d2d2;"></div>
<span class="t" style="left:20.73px;top:144px;font-size:9.2px;color:#217346;">A</span>
<div style="left:28.8px;top:142.5px;width:1px;height:10.8px;background:#c9c9c9;"></div>
<span class="t" style="left:29.73px;top:144px;font-size:9.2px;color:#3a3a3a;">B</span>
<div style="left:35.8px;top:142.5px;width:1px;height:10.8px;background:#c9c9c9;"></div>
<span class="t" style="left:110.98px;top:144px;font-size:9.2px;color:#3a3a3a;">C</span>
<div style="left:191.8px;top:142.5px;width:1px;height:10.8px;background:#c9c9c9;"></div>
<span class="t" style="left:199.98px;top:144px;font-size:9.2px;color:#3a3a3a;">D</span>
<div style="left:213.8px;top:142.5px;width:1px;height:10.8px;background:#c9c9c9;"></div>
<span class="t" style="left:252.23px;top:144px;font-size:9.2px;color:#3a3a3a;">E</span>
<div style="left:295.8px;top:142.5px;width:1px;height:10.8px;background:#c9c9c9;"></div>
<span class="t" style="left:334.49px;top:144px;font-size:9.2px;color:#3a3a3a;">F</span>
<div style="left:377.8px;top:142.5px;width:1px;height:10.8px;background:#c9c9c9;"></div>
<span class="t" style="left:385.72px;top:144px;font-size:9.2px;color:#3a3a3a;">G</span>
<div style="left:399.8px;top:142.5px;width:1px;height:10.8px;background:#c9c9c9;"></div>
<span class="t" style="left:476.98px;top:144px;font-size:9.2px;color:#3a3a3a;">H</span>
<div style="left:559.8px;top:142.5px;width:1px;height:10.8px;background:#c9c9c9;"></div>
<span class="t" style="left:570.17px;top:144px;font-size:9.2px;color:#3a3a3a;">I</span>
<div style="left:582.1px;top:142.5px;width:1px;height:10.8px;background:#c9c9c9;"></div>
<span class="t" style="left:621.15px;top:144px;font-size:9.2px;color:#3a3a3a;">J</span>
<div style="left:663.8px;top:142.5px;width:1px;height:10.8px;background:#c9c9c9;"></div>
<span class="t" style="left:702.23px;top:144px;font-size:9.2px;color:#3a3a3a;">K</span>
<div style="left:745.8px;top:142.5px;width:1px;height:10.8px;background:#c9c9c9;"></div>
<span class="t" style="left:754.74px;top:144px;font-size:9.2px;color:#3a3a3a;">L</span>
<div style="left:767.8px;top:142.5px;width:1px;height:10.8px;background:#c9c9c9;"></div>
<span class="t" style="left:837.97px;top:144px;font-size:9.2px;color:#3a3a3a;">M</span>
<div style="left:914.8px;top:142.5px;width:1px;height:10.8px;background:#c9c9c9;"></div>
<span class="t" style="left:950.98px;top:144px;font-size:9.2px;color:#3a3a3a;">N</span>
<div style="left:992.8px;top:142.5px;width:1px;height:10.8px;background:#c9c9c9;"></div>
<span class="t" style="left:1028.07px;top:144px;font-size:9.2px;color:#3a3a3a;">O</span>
<div style="left:18.3px;top:152.3px;width:11px;height:1.4px;background:#217346;"></div>
<div style="left:0px;top:152.8px;width:18.3px;height:0.8px;background:#c9c9c9;"></div>
<div style="left:0px;top:153.3px;width:18.3px;height:411px;background:#e6e6e6;"></div>
<div style="left:0px;top:153.3px;width:18.3px;height:33.2px;background:#d2d2d2;"></div>
<div style="left:0;top:153px;width:18.3px;height:33px;overflow:hidden;border-bottom:1px solid #c9c9c9;"><span class="t" style="left:6.82px;top:24px;font-size:9.2px;color:#217346;transform:scaleX(0.93);">1</span></div>
<div style="left:0;top:186px;width:18.3px;height:25px;overflow:hidden;border-bottom:1px solid #c9c9c9;"><span class="t" style="left:6.82px;top:16px;font-size:9.2px;color:#444;transform:scaleX(0.93);">2</span></div>
<div style="left:0;top:211px;width:18.3px;height:7px;overflow:hidden;border-bottom:1px solid #c9c9c9;"><span class="t" style="left:6.82px;top:-2px;font-size:9.2px;color:#444;transform:scaleX(0.93);">3</span></div>
<div style="left:0;top:218px;width:18.3px;height:23px;overflow:hidden;border-bottom:1px solid #c9c9c9;"><span class="t" style="left:6.82px;top:14px;font-size:9.2px;color:#444;transform:scaleX(0.93);">4</span></div>
<div style="left:0;top:241px;width:18.3px;height:15px;overflow:hidden;border-bottom:1px solid #c9c9c9;"><span class="t" style="left:6.82px;top:5px;font-size:9.2px;color:#444;transform:scaleX(0.93);">5</span></div>
<div style="left:0;top:256px;width:18.3px;height:16px;overflow:hidden;border-bottom:1px solid #c9c9c9;"><span class="t" style="left:6.82px;top:7px;font-size:9.2px;color:#444;transform:scaleX(0.93);">6</span></div>
<div style="left:0;top:272px;width:18.3px;height:20px;overflow:hidden;border-bottom:1px solid #c9c9c9;"><span class="t" style="left:6.82px;top:11px;font-size:9.2px;color:#444;transform:scaleX(0.93);">7</span></div>
<div style="left:0;top:292px;width:18.3px;height:14px;overflow:hidden;border-bottom:1px solid #c9c9c9;"><span class="t" style="left:6.82px;top:4px;font-size:9.2px;color:#444;transform:scaleX(0.93);">8</span></div>
<div style="left:0;top:306px;width:18.3px;height:7px;overflow:hidden;border-bottom:1px solid #c9c9c9;"><span class="t" style="left:6.82px;top:-3px;font-size:9.2px;color:#444;transform:scaleX(0.93);">9</span></div>
<div style="left:0;top:313px;width:18.3px;height:19px;overflow:hidden;border-bottom:1px solid #c9c9c9;"><span class="t" style="left:4.44px;top:10px;font-size:9.2px;color:#444;transform:scaleX(0.93);">10</span></div>
<div style="left:0;top:332px;width:18.3px;height:20px;overflow:hidden;border-bottom:1px solid #c9c9c9;"><span class="t" style="left:4.76px;top:11px;font-size:9.2px;color:#444;transform:scaleX(0.93);">11</span></div>
<div style="left:0;top:352px;width:18.3px;height:19px;overflow:hidden;border-bottom:1px solid #c9c9c9;"><span class="t" style="left:4.44px;top:9px;font-size:9.2px;color:#444;transform:scaleX(0.93);">12</span></div>
<div style="left:0;top:371px;width:18.3px;height:7px;overflow:hidden;border-bottom:1px solid #c9c9c9;"><span class="t" style="left:4.44px;top:-3px;font-size:9.2px;color:#444;transform:scaleX(0.93);">13</span></div>
<div style="left:0;top:378px;width:18.3px;height:6px;overflow:hidden;border-bottom:1px solid #c9c9c9;"><span class="t" style="left:4.44px;top:-3px;font-size:9.2px;color:#444;transform:scaleX(0.93);">14</span></div>
<div style="left:0;top:384px;width:18.3px;height:8px;overflow:hidden;border-bottom:1px solid #c9c9c9;"><span class="t" style="left:4.44px;top:-2px;font-size:9.2px;color:#444;transform:scaleX(0.93);">15</span></div>
<div style="left:0;top:392px;width:18.3px;height:20px;overflow:hidden;border-bottom:1px solid #c9c9c9;"><span class="t" style="left:4.44px;top:11px;font-size:9.2px;color:#444;transform:scaleX(0.93);">16</span></div>
<div style="left:0;top:412px;width:18.3px;height:14px;overflow:hidden;border-bottom:1px solid #c9c9c9;"><span class="t" style="left:4.44px;top:4px;font-size:9.2px;color:#444;transform:scaleX(0.93);">17</span></div>
<div style="left:0;top:426px;width:18.3px;height:17px;overflow:hidden;border-bottom:1px solid #c9c9c9;"><span class="t" style="left:4.44px;top:8px;font-size:9.2px;color:#444;transform:scaleX(0.93);">18</span></div>
<div style="left:0;top:443px;width:18.3px;height:19px;overflow:hidden;border-bottom:1px solid #c9c9c9;"><span class="t" style="left:4.44px;top:10px;font-size:9.2px;color:#444;transform:scaleX(0.93);">19</span></div>
<div style="left:0;top:462px;width:18.3px;height:7px;overflow:hidden;border-bottom:1px solid #c9c9c9;"><span class="t" style="left:4.44px;top:-3px;font-size:9.2px;color:#444;transform:scaleX(0.93);">20</span></div>
<div style="left:0;top:469px;width:18.3px;height:7px;overflow:hidden;border-bottom:1px solid #c9c9c9;"><span class="t" style="left:4.44px;top:-3px;font-size:9.2px;color:#444;transform:scaleX(0.93);">21</span></div>
<div style="left:0;top:476px;width:18.3px;height:8px;overflow:hidden;border-bottom:1px solid #c9c9c9;"><span class="t" style="left:4.44px;top:-1px;font-size:9.2px;color:#444;transform:scaleX(0.93);">22</span></div>
<div style="left:0;top:484px;width:18.3px;height:15px;overflow:hidden;border-bottom:1px solid #c9c9c9;"><span class="t" style="left:4.44px;top:5px;font-size:9.2px;color:#444;transform:scaleX(0.93);">23</span></div>
<div style="left:0;top:499px;width:18.3px;height:13px;overflow:hidden;border-bottom:1px solid #c9c9c9;"><span class="t" style="left:4.44px;top:4px;font-size:9.2px;color:#444;transform:scaleX(0.93);">24</span></div>
<div style="left:0;top:512px;width:18.3px;height:14px;overflow:hidden;border-bottom:1px solid #c9c9c9;"><span class="t" style="left:4.44px;top:4px;font-size:9.2px;color:#444;transform:scaleX(0.93);">25</span></div>
<div style="left:0;top:526px;width:18.3px;height:14px;overflow:hidden;border-bottom:1px solid #c9c9c9;"><span class="t" style="left:4.44px;top:4px;font-size:9.2px;color:#444;transform:scaleX(0.93);">26</span></div>
<div style="left:0;top:540px;width:18.3px;height:14px;overflow:hidden;border-bottom:1px solid #c9c9c9;"><span class="t" style="left:4.44px;top:4px;font-size:9.2px;color:#444;transform:scaleX(0.93);">27</span></div>
<div style="left:0;top:554px;width:18.3px;height:10px;overflow:hidden;border-bottom:1px solid #c9c9c9;"><span class="t" style="left:4.44px;top:3px;font-size:9.2px;color:#444;transform:scaleX(0.93);">28</span></div>
<div style="left:17.8px;top:153.3px;width:1.3px;height:33.2px;background:#217346;"></div>
<div style="left:18.3px;top:153.3px;width:1027.7px;height:410.7px;background:#fff;"></div>
<div style="left:18px;top:153px;width:1028px;height:33.5px;background:#404040;"></div>
<div style="left:18px;top:186px;width:1028px;height:25.3px;background:#6699cc;"></div>
<div style="left:385.3px;top:153px;width:68.7px;height:34px;background:#6699cc;"></div>
<div style="left:17.8px;top:152.8px;width:12px;height:34.2px;border:1.4px solid #217346;box-shadow:inset 0 0 0 0.6px #fff;"></div>
<div style="left:27px;top:184px;width:4px;height:4px;background:#217346;border-left:1px solid #fff;border-top:1px solid #fff;"></div>
<svg style="left:30px;top:161px;" width="13" height="18" viewBox="0 0 13 18"><path d="M3.6 1.5 C1.8 1.7 1.2 2.9 1.2 4.4 V10 C1.2 12.2 2.6 13.4 4.2 13.4 H8 C10.2 13.4 11.4 12 11.4 10 V4.6 C11.4 2.6 10.2 1.4 8.2 1.4 H5.8" fill="none" stroke="#fff" stroke-width="1.4"/><path d="M4 14.8 H8.4 L7.4 17 H5 Z" fill="#e6e6e6"/></svg>
<span class="t" style="left:45.00px;top:165px;font-size:9.4px;color:#fff;transform:scaleX(0.9123);text-shadow:0.25px 0 0 #fff;">LUZ</span>
<div style="left:64px;top:164px;width:0.8px;height:10.5px;background:#aaa;"></div>
<span class="t" style="left:67.40px;top:165px;font-size:4.3px;color:#c8c8c8;transform:scaleX(0.9513);">Planilhas</span>
<span class="t" style="left:67.40px;top:170px;font-size:4.3px;color:#c8c8c8;transform:scaleX(0.9007);">Empresariais</span>
<span class="t" style="left:123.30px;top:166px;font-size:8.8px;color:#fff;font-weight:700;transform:scaleX(0.8423);">CADASTRO</span>
<span class="t" style="left:185.30px;top:161px;font-size:8.8px;color:#fff;font-weight:700;transform:scaleX(0.8459);">CONTROLE DO</span>
<span class="t" style="left:186.55px;top:172px;font-size:8.8px;color:#fff;font-weight:700;transform:scaleX(0.8545);">LOTEAMENTO</span>
<span class="t" style="left:255.35px;top:161px;font-size:8.8px;color:#fff;font-weight:700;transform:scaleX(0.8679);">CONTRATO DE</span>
<span class="t" style="left:269.40px;top:172px;font-size:8.8px;color:#fff;font-weight:700;transform:scaleX(0.8830);">VENDA</span>
<span class="t" style="left:327.40px;top:166px;font-size:8.8px;color:#fff;font-weight:700;transform:scaleX(0.8381);">RELATÓRIOS</span>
<span class="t" style="left:395.30px;top:166px;font-size:8.8px;color:#fff;font-weight:700;transform:scaleX(0.8566);">DASHBOARD</span>
<span class="t" style="left:464.30px;top:166px;font-size:8.8px;color:#fff;font-weight:700;transform:scaleX(0.8320);">INSTRUÇÕES</span>
<span class="t" style="left:115.35px;top:198px;font-size:8.8px;color:#fff;font-weight:700;transform:scaleX(0.8535);">VENDAS</span>
<span class="t" style="left:182.15px;top:198px;font-size:8.8px;color:#fff;font-weight:700;transform:scaleX(0.8383);">FLUXO DE CAIXA</span>
<div style="left:255px;top:191.2px;width:82px;height:20.3px;background:#fff;"></div>
<span class="t" style="left:284.10px;top:198px;font-size:8.8px;color:#333;font-weight:700;transform:scaleX(0.7772);">LOTES</span>
<div style="left:37px;top:219px;width:154.5px;height:21.3px;background:#d9d9d9;"></div>
<div style="left:191.3px;top:218.3px;width:105px;height:23.2px;background:#fff;border:1px solid #e2e2e2;"></div>
<span class="t" style="left:46.00px;top:226px;font-size:8.6px;color:#404040;font-weight:700;transform:scaleX(0.9762);">Informe o ano:</span>
<span class="t" style="left:202.30px;top:226px;font-size:8.6px;color:#333;transform:scaleX(1.0297);">2020</span>
<div style="left:401.3px;top:219px;width:159.2px;height:21.3px;background:#d9d9d9;"></div>
<div style="left:560.3px;top:218.3px;width:104.7px;height:23.2px;background:#fff;border:1px solid #e2e2e2;"></div>
<span class="t" style="left:410.50px;top:226px;font-size:8.6px;color:#404040;font-weight:700;transform:scaleX(0.9699);">Informe o Lote:</span>
<span class="t" style="left:569.80px;top:226px;font-size:8.6px;color:#333;transform:scaleX(1.0045);">Lote A</span>
<div style="left:36.3px;top:272.3px;width:156.7px;height:34.5px;background:#f2f2f2;border:1px solid #e8e8e8;border-radius:2px;"></div>
<span class="t" style="left:46.00px;top:260px;font-size:10.4px;color:#111;font-weight:700;transform:scaleX(0.9336);">Parcelas pagas / parcela total</span>
<span class="t" style="left:84.15px;top:281px;font-size:19.4px;color:#404040;font-weight:700;transform:scaleX(1.0282);">13 / 30</span>
<div style="left:214.3px;top:272.3px;width:164.2px;height:34.5px;background:#f2f2f2;border:1px solid #e8e8e8;border-radius:2px;"></div>
<span class="t" style="left:224.30px;top:260px;font-size:10.4px;color:#111;font-weight:700;transform:scaleX(0.9175);">Valores pagos</span>
<span class="t" style="left:237.90px;top:281px;font-size:19.4px;color:#404040;font-weight:700;transform:scaleX(0.9598);">R$520.000,00</span>
<div style="left:400.3px;top:272.3px;width:160.2px;height:34.5px;background:#f2f2f2;border:1px solid #e8e8e8;border-radius:2px;"></div>
<span class="t" style="left:410.50px;top:260px;font-size:10.4px;color:#111;font-weight:700;transform:scaleX(0.9845);">Valor total</span>
<span class="t" style="left:413.90px;top:281px;font-size:19.4px;color:#404040;font-weight:700;transform:scaleX(0.9633);">R$1.400.000,00</span>
<div style="left:582.6px;top:272.3px;width:163.89999999999998px;height:34.5px;background:#f2f2f2;border:1px solid #e8e8e8;border-radius:2px;"></div>
<span class="t" style="left:592.60px;top:260px;font-size:10.4px;color:#111;font-weight:700;transform:scaleX(0.9580);">Valor restante</span>
<span class="t" style="left:606.05px;top:281px;font-size:19.4px;color:#404040;font-weight:700;transform:scaleX(0.9598);">R$880.000,00</span>
<div style="left:768.3px;top:272.3px;width:147.20000000000005px;height:34.5px;background:#f2f2f2;border:1px solid #e8e8e8;border-radius:2px;"></div>
<span class="t" style="left:778.60px;top:260px;font-size:10.4px;color:#111;font-weight:700;transform:scaleX(0.9137);">Parcelas restantes</span>
<span class="t" style="left:831.65px;top:281px;font-size:19.4px;color:#404040;font-weight:700;transform:scaleX(0.9500);">17</span>
<span class="t" style="left:46.00px;top:320px;font-size:10.4px;color:#111;font-weight:700;transform:scaleX(0.9126);">Recebimentos mensais</span>
<div style="left:36.3px;top:333px;width:879.2px;height:82px;background:#fff;border:1px solid #dedede;"></div>
<div style="left:47.3px;top:340.5px;width:857.4px;height:58.69999999999999px;background:#f2f2f2;"></div>
<div style="left:47.3px;top:398.8px;width:857.4px;height:0.9px;background:#dadada;"></div>
<div style="left:62.03px;top:387.46px;width:42px;height:11.74px;background:#54ae40;"></div>
<span class="t" style="left:68.53px;top:376px;font-size:7.2px;color:#404040;transform:scaleX(0.9287);">R$20.000</span>
<span class="t" style="left:72.53px;top:405px;font-size:7.2px;color:#595959;transform:scaleX(0.8893);">Janeiro</span>
<div style="left:133.48px;top:375.72px;width:42px;height:23.48px;background:#54ae40;"></div>
<span class="t" style="left:139.98px;top:364px;font-size:7.2px;color:#404040;transform:scaleX(0.9287);">R$40.000</span>
<span class="t" style="left:140.48px;top:405px;font-size:7.2px;color:#595959;transform:scaleX(0.9207);">Fevereiro</span>
<div style="left:204.93px;top:371.61px;width:42px;height:27.59px;background:#54ae40;"></div>
<span class="t" style="left:211.43px;top:360px;font-size:7.2px;color:#404040;transform:scaleX(0.9287);">R$47.000</span>
<span class="t" style="left:216.28px;top:405px;font-size:7.2px;color:#595959;transform:scaleX(0.9648);">Março</span>
<div style="left:276.38px;top:378.65px;width:42px;height:20.54px;background:#54ae40;"></div>
<span class="t" style="left:282.88px;top:367px;font-size:7.2px;color:#404040;transform:scaleX(0.9287);">R$35.000</span>
<span class="t" style="left:289.88px;top:405px;font-size:7.2px;color:#595959;transform:scaleX(1.0414);">Abril</span>
<div style="left:347.83px;top:348.13px;width:42px;height:51.07px;background:#54ae40;"></div>
<span class="t" style="left:354.33px;top:337px;font-size:7.2px;color:#404040;transform:scaleX(0.9287);">R$87.000</span>
<span class="t" style="left:360.83px;top:405px;font-size:7.2px;color:#595959;transform:scaleX(1.0252);">Maio</span>
<div style="left:419.28px;top:381.59px;width:42px;height:17.61px;background:#54ae40;"></div>
<span class="t" style="left:425.78px;top:370px;font-size:7.2px;color:#404040;transform:scaleX(0.9287);">R$30.000</span>
<span class="t" style="left:430.78px;top:405px;font-size:7.2px;color:#595959;transform:scaleX(0.9685);">Junho</span>
<div style="left:490.73px;top:375.72px;width:42px;height:23.48px;background:#54ae40;"></div>
<span class="t" style="left:497.23px;top:364px;font-size:7.2px;color:#404040;transform:scaleX(0.9287);">R$40.000</span>
<span class="t" style="left:503.48px;top:405px;font-size:7.2px;color:#595959;transform:scaleX(0.9586);">Julho</span>
<div style="left:562.17px;top:393.33px;width:42px;height:5.87px;background:#54ae40;"></div>
<span class="t" style="left:568.67px;top:382px;font-size:7.2px;color:#404040;transform:scaleX(0.9287);">R$10.000</span>
<span class="t" style="left:572.42px;top:405px;font-size:7.2px;color:#595959;transform:scaleX(0.9591);">Agosto</span>
<span class="t" style="left:648.38px;top:388px;font-size:7.2px;color:#404040;transform:scaleX(0.9464);">R$0</span>
<span class="t" style="left:639.12px;top:405px;font-size:7.2px;color:#595959;transform:scaleX(0.9931);">Setembro</span>
<span class="t" style="left:719.82px;top:388px;font-size:7.2px;color:#404040;transform:scaleX(0.9464);">R$0</span>
<span class="t" style="left:712.82px;top:405px;font-size:7.2px;color:#595959;transform:scaleX(1.0186);">Outubro</span>
<span class="t" style="left:791.27px;top:388px;font-size:7.2px;color:#404040;transform:scaleX(0.9464);">R$0</span>
<span class="t" style="left:781.27px;top:405px;font-size:7.2px;color:#595959;transform:scaleX(0.9786);">Novembro</span>
<span class="t" style="left:862.73px;top:388px;font-size:7.2px;color:#404040;transform:scaleX(0.9464);">R$0</span>
<span class="t" style="left:852.73px;top:405px;font-size:7.2px;color:#595959;transform:scaleX(0.9786);">Dezembro</span>
<span class="t" style="left:46.00px;top:431px;font-size:10.4px;color:#111;font-weight:700;transform:scaleX(0.8934);">Parcelas mensais</span>
<div style="left:36.3px;top:443px;width:879.2px;height:83px;background:#fff;border:1px solid #dedede;"></div>
<div style="left:46.6px;top:450.2px;width:857.4px;height:60.30000000000001px;background:#f2f2f2;"></div>
<div style="left:46.6px;top:510.1px;width:857.4px;height:0.9px;background:#dadada;"></div>
<div style="left:61.33px;top:498.44px;width:42px;height:12.06px;background:#6699cc;"></div>
<span class="t" style="left:67.83px;top:487px;font-size:7.2px;color:#404040;transform:scaleX(0.9287);">R$20.000</span>
<span class="t" style="left:71.83px;top:516px;font-size:7.2px;color:#595959;transform:scaleX(0.8893);">Janeiro</span>
<div style="left:132.78px;top:486.38px;width:42px;height:24.12px;background:#6699cc;"></div>
<span class="t" style="left:139.28px;top:475px;font-size:7.2px;color:#404040;transform:scaleX(0.9287);">R$40.000</span>
<span class="t" style="left:139.78px;top:516px;font-size:7.2px;color:#595959;transform:scaleX(0.9207);">Fevereiro</span>
<div style="left:204.22px;top:482.16px;width:42px;height:28.34px;background:#6699cc;"></div>
<span class="t" style="left:210.72px;top:471px;font-size:7.2px;color:#404040;transform:scaleX(0.9287);">R$47.000</span>
<span class="t" style="left:215.57px;top:516px;font-size:7.2px;color:#595959;transform:scaleX(0.9648);">Março</span>
<div style="left:275.68px;top:489.39px;width:42px;height:21.11px;background:#6699cc;"></div>
<span class="t" style="left:282.18px;top:478px;font-size:7.2px;color:#404040;transform:scaleX(0.9287);">R$35.000</span>
<span class="t" style="left:289.18px;top:516px;font-size:7.2px;color:#595959;transform:scaleX(1.0414);">Abril</span>
<div style="left:347.13px;top:458.04px;width:42px;height:52.46px;background:#6699cc;"></div>
<span class="t" style="left:353.63px;top:446px;font-size:7.2px;color:#404040;transform:scaleX(0.9287);">R$87.000</span>
<span class="t" style="left:360.13px;top:516px;font-size:7.2px;color:#595959;transform:scaleX(1.0252);">Maio</span>
<div style="left:418.58px;top:492.41px;width:42px;height:18.09px;background:#6699cc;"></div>
<span class="t" style="left:425.08px;top:481px;font-size:7.2px;color:#404040;transform:scaleX(0.9287);">R$30.000</span>
<span class="t" style="left:430.08px;top:516px;font-size:7.2px;color:#595959;transform:scaleX(0.9685);">Junho</span>
<div style="left:490.03px;top:486.38px;width:42px;height:24.12px;background:#6699cc;"></div>
<span class="t" style="left:496.53px;top:475px;font-size:7.2px;color:#404040;transform:scaleX(0.9287);">R$40.000</span>
<span class="t" style="left:502.78px;top:516px;font-size:7.2px;color:#595959;transform:scaleX(0.9586);">Julho</span>
<div style="left:561.48px;top:504.47px;width:42px;height:6.03px;background:#6699cc;"></div>
<span class="t" style="left:567.98px;top:493px;font-size:7.2px;color:#404040;transform:scaleX(0.9287);">R$10.000</span>
<span class="t" style="left:571.73px;top:516px;font-size:7.2px;color:#595959;transform:scaleX(0.9591);">Agosto</span>
<span class="t" style="left:647.68px;top:499px;font-size:7.2px;color:#404040;transform:scaleX(0.9464);">R$0</span>
<span class="t" style="left:638.43px;top:516px;font-size:7.2px;color:#595959;transform:scaleX(0.9931);">Setembro</span>
<span class="t" style="left:719.12px;top:499px;font-size:7.2px;color:#404040;transform:scaleX(0.9464);">R$0</span>
<span class="t" style="left:712.12px;top:516px;font-size:7.2px;color:#595959;transform:scaleX(1.0186);">Outubro</span>
<span class="t" style="left:790.58px;top:499px;font-size:7.2px;color:#404040;transform:scaleX(0.9464);">R$0</span>
<span class="t" style="left:780.58px;top:516px;font-size:7.2px;color:#595959;transform:scaleX(0.9786);">Novembro</span>
<span class="t" style="left:862.03px;top:499px;font-size:7.2px;color:#404040;transform:scaleX(0.9464);">R$0</span>
<span class="t" style="left:852.03px;top:516px;font-size:7.2px;color:#595959;transform:scaleX(0.9786);">Dezembro</span>
<div style="left:1046px;top:141px;width:14px;height:423px;background:#e9e9e9;"></div>
<div style="left:1048.3px;top:142.2px;width:10.2px;height:10.3px;background:#fff;border:1px solid #c6c6c6;"></div>
<svg style="left:1050.9px;top:145.6px;" width="5" height="4" viewBox="0 0 5 4"><path d="M0.4 3.2 L2.5 0.6 L4.6 3.2 Z" fill="#555"/></svg>
<div style="left:1048.3px;top:152.4px;width:10.2px;height:164px;background:#fff;border:1px solid #c6c6c6;"></div>
<div style="left:1048.3px;top:553.6px;width:10.2px;height:10.2px;background:#fff;border:1px solid #c6c6c6;"></div>
<svg style="left:1050.9px;top:557px;" width="5" height="4" viewBox="0 0 5 4"><path d="M0.4 0.6 L2.5 3.2 L4.6 0.6 Z" fill="#555"/></svg>
<div style="left:0px;top:564px;width:1060px;height:16.8px;background:#e6e6e6;"></div>
<div style="left:0px;top:563.7px;width:1046px;height:0.9px;background:#c4c4c4;"></div>
<svg style="left:15px;top:569px;" width="5" height="7" viewBox="0 0 5 7"><path d="M4 0.8 L1 3.5 L4 6.2" fill="none" stroke="#c0c0c0" stroke-width="0.9"/></svg>
<svg style="left:30px;top:569px;" width="5" height="7" viewBox="0 0 5 7"><path d="M1 0.8 L4 3.5 L1 6.2" fill="none" stroke="#c0c0c0" stroke-width="0.9"/></svg>
<span class="t" style="left:64.30px;top:566px;font-size:10px;color:#444;transform:scaleX(0.8741);">Cad_lo</span>
<span class="t" style="left:106.80px;top:566px;font-size:10px;color:#444;transform:scaleX(0.8513);">Cad_cl</span>
<span class="t" style="left:147.50px;top:566px;font-size:10px;color:#444;transform:scaleX(0.8704);">Con_ve</span>
<span class="t" style="left:191.80px;top:566px;font-size:10px;color:#444;transform:scaleX(0.8784);">Con_rec</span>
<span class="t" style="left:239.30px;top:566px;font-size:10px;color:#444;transform:scaleX(0.8907);">Con_ga</span>
<span class="t" style="left:285.00px;top:566px;font-size:10px;color:#444;transform:scaleX(0.8940);">Cont_ve</span>
<span class="t" style="left:333.00px;top:566px;font-size:10px;color:#444;transform:scaleX(0.8288);">Rel_ve</span>
<span class="t" style="left:374.50px;top:566px;font-size:10px;color:#444;transform:scaleX(0.8291);">Rel_fc</span>
<span class="t" style="left:413.80px;top:566px;font-size:10px;color:#444;transform:scaleX(0.8292);">Rel_lt</span>
<span class="t" style="left:450.80px;top:566px;font-size:10px;color:#444;transform:scaleX(0.8649);">Dash1</span>
<span class="t" style="left:491.30px;top:566px;font-size:10px;color:#444;transform:scaleX(0.8822);">Dash2</span>
<span class="t" style="left:571.30px;top:566px;font-size:10px;color:#444;transform:scaleX(0.9391);">INI</span>
<span class="t" style="left:597.00px;top:566px;font-size:10px;color:#444;transform:scaleX(0.9141);">DUV</span>
<span class="t" style="left:630.00px;top:566px;font-size:10px;color:#444;transform:scaleX(0.8306);">SUG</span>
<span class="t" style="left:662.00px;top:566px;font-size:10px;color:#444;transform:scaleX(0.8893);">LUZ</span>
<div style="left:56.6px;top:567px;width:0.9px;height:11px;background:#ababab;"></div>
<div style="left:99.1px;top:567px;width:0.9px;height:11px;background:#ababab;"></div>
<div style="left:140.9px;top:567px;width:0.9px;height:11px;background:#ababab;"></div>
<div style="left:185.1px;top:567px;width:0.9px;height:11px;background:#ababab;"></div>
<div style="left:232.1px;top:567px;width:0.9px;height:11px;background:#ababab;"></div>
<div style="left:277.6px;top:567px;width:0.9px;height:11px;background:#ababab;"></div>
<div style="left:325.90000000000003px;top:567px;width:0.9px;height:11px;background:#ababab;"></div>
<div style="left:366.6px;top:567px;width:0.9px;height:11px;background:#ababab;"></div>
<div style="left:405.90000000000003px;top:567px;width:0.9px;height:11px;background:#ababab;"></div>
<div style="left:443.40000000000003px;top:567px;width:0.9px;height:11px;background:#ababab;"></div>
<div style="left:483.40000000000003px;top:567px;width:0.9px;height:11px;background:#ababab;"></div>
<div style="left:590.1px;top:567px;width:0.9px;height:11px;background:#ababab;"></div>
<div style="left:623.4px;top:567px;width:0.9px;height:11px;background:#ababab;"></div>
<div style="left:655.4px;top:567px;width:0.9px;height:11px;background:#ababab;"></div>
<div style="left:685.1px;top:567px;width:0.9px;height:11px;background:#ababab;"></div>
<div style="left:524.5px;top:564px;width:40.5px;height:14px;background:#fff;"></div>
<div style="left:524px;top:564px;width:0.8px;height:13px;background:#cfcfcf;"></div>
<div style="left:564.6px;top:564px;width:0.8px;height:13px;background:#cfcfcf;"></div>
<div style="left:524.5px;top:577px;width:40.5px;height:1px;background:#217346;"></div>
<div style="left:524.5px;top:578px;width:40.5px;height:1px;background:rgba(33,115,70,0.35);"></div>
<span class="t" style="left:530.80px;top:566px;font-size:10px;color:#217346;font-weight:700;transform:scaleX(0.8729);">Dash3</span>
<svg style="left:703.5px;top:566.3px;" width="12" height="12" viewBox="0 0 12 12"><circle cx="6" cy="6" r="5" fill="none" stroke="#666" stroke-width="0.9"/><path d="M6 3.2 V8.8 M3.2 6 H8.8" stroke="#666" stroke-width="0.9"/></svg>
<div style="left:890.3px;top:566.6px;width:1px;height:1.3px;background:#999;"></div>
<div style="left:890.3px;top:569.6px;width:1px;height:1.3px;background:#999;"></div>
<div style="left:890.3px;top:572.6px;width:1px;height:1.3px;background:#999;"></div>
<div style="left:890.3px;top:575.6px;width:1px;height:1.3px;background:#999;"></div>
<div style="left:900px;top:567px;width:144.3px;height:10.3px;background:#d2d2d2;"></div>
<div style="left:900px;top:567px;width:10.3px;height:10.3px;background:#fff;border:1px solid #c6c6c6;"></div>
<svg style="left:903px;top:570px;" width="4" height="5" viewBox="0 0 4 5"><path d="M3.4 0.4 L0.8 2.5 L3.4 4.6 Z" fill="#444"/></svg>
<div style="left:910.3px;top:567px;width:72px;height:10.3px;background:#fff;border:1px solid #c6c6c6;"></div>
<div style="left:1034px;top:567px;width:10.3px;height:10.3px;background:#fff;border:1px solid #c6c6c6;"></div>
<svg style="left:1037.4px;top:570px;" width="4" height="5" viewBox="0 0 4 5"><path d="M0.6 0.4 L3.2 2.5 L0.6 4.6 Z" fill="#444"/></svg>
<div style="left:0px;top:580.6px;width:1060px;height:14px;background:#f3f2f1;"></div>
<div style="left:0px;top:580.3px;width:1060px;height:0.8px;background:#fafafa;"></div>
<span class="t" style="left:5.80px;top:584px;font-size:7.4px;color:#555;transform:scaleX(0.9724);">Pronto</span>
<svg style="left:40px;top:583px;" width="11" height="10" viewBox="0 0 11 10"><rect x="0.6" y="0.8" width="7.6" height="7.4" fill="none" stroke="#555" stroke-width="0.9"/><rect x="0.6" y="0.8" width="7.6" height="2.4" fill="#666"/><circle cx="7.2" cy="6.6" r="2.7" fill="#f3f2f1" stroke="#444" stroke-width="0.9"/><circle cx="7.2" cy="6.6" r="1.1" fill="#444"/></svg>
<div style="left:859px;top:581px;width:27px;height:13.5px;background:#c8c6c4;"></div>
<svg style="left:867px;top:583px;" width="11" height="10" viewBox="0 0 11 10"><rect x="0.5" y="0.5" width="9.6" height="8.8" fill="none" stroke="#444" stroke-width="1"/><path d="M3.7 0.5 V9.3 M6.9 0.5 V9.3 M0.5 3.4 H10.1 M0.5 6.4 H10.1" stroke="#444" stroke-width="0.9"/></svg>
<svg style="left:895px;top:583px;" width="11" height="10" viewBox="0 0 11 10"><rect x="0.5" y="0.5" width="9.6" height="8.8" fill="none" stroke="#555" stroke-width="0.9"/><rect x="2.8" y="2.4" width="5" height="5" fill="none" stroke="#555" stroke-width="0.8"/><path d="M4.2 3.8 H6.4 M4.2 5.8 H6.4" stroke="#777" stroke-width="0.6"/></svg>
<svg style="left:922.5px;top:583px;" width="11" height="10" viewBox="0 0 11 10"><rect x="0.5" y="0.5" width="9.6" height="8.8" fill="none" stroke="#555" stroke-width="0.9"/><path d="M3.6 0.5 V5.4 H7.2 V0.5" fill="none" stroke="#555" stroke-width="0.9"/></svg>
<div style="left:945px;top:587.6px;width:5px;height:0.9px;background:#555;"></div>
<div style="left:954px;top:587.6px;width:68.5px;height:0.8px;background:#b0b0b0;"></div>
<div style="left:988.6px;top:585.5px;width:0.8px;height:5px;background:#999;"></div>
<div style="left:983.6px;top:583.8px;width:3.4px;height:8px;background:#555;"></div>
<div style="left:1026px;top:587.6px;width:5.4px;height:0.9px;background:#555;"></div>
<div style="left:1028.3px;top:585.3px;width:0.9px;height:5.4px;background:#555;"></div>
<span class="t" style="left:1041.00px;top:585px;font-size:7.2px;color:#555;transform:scaleX(0.8813);">90%</span>
<div style="left:0px;top:594px;width:1060px;height:2px;background:#0a0a0a;"></div>
<div style="left:33px;top:594px;width:237px;height:2px;background:#cdcdcd;"></div>
<div style="left:0px;top:594px;width:1060px;height:0.5px;background:rgba(243,242,241,0.25);"></div>
</div></body></html>
